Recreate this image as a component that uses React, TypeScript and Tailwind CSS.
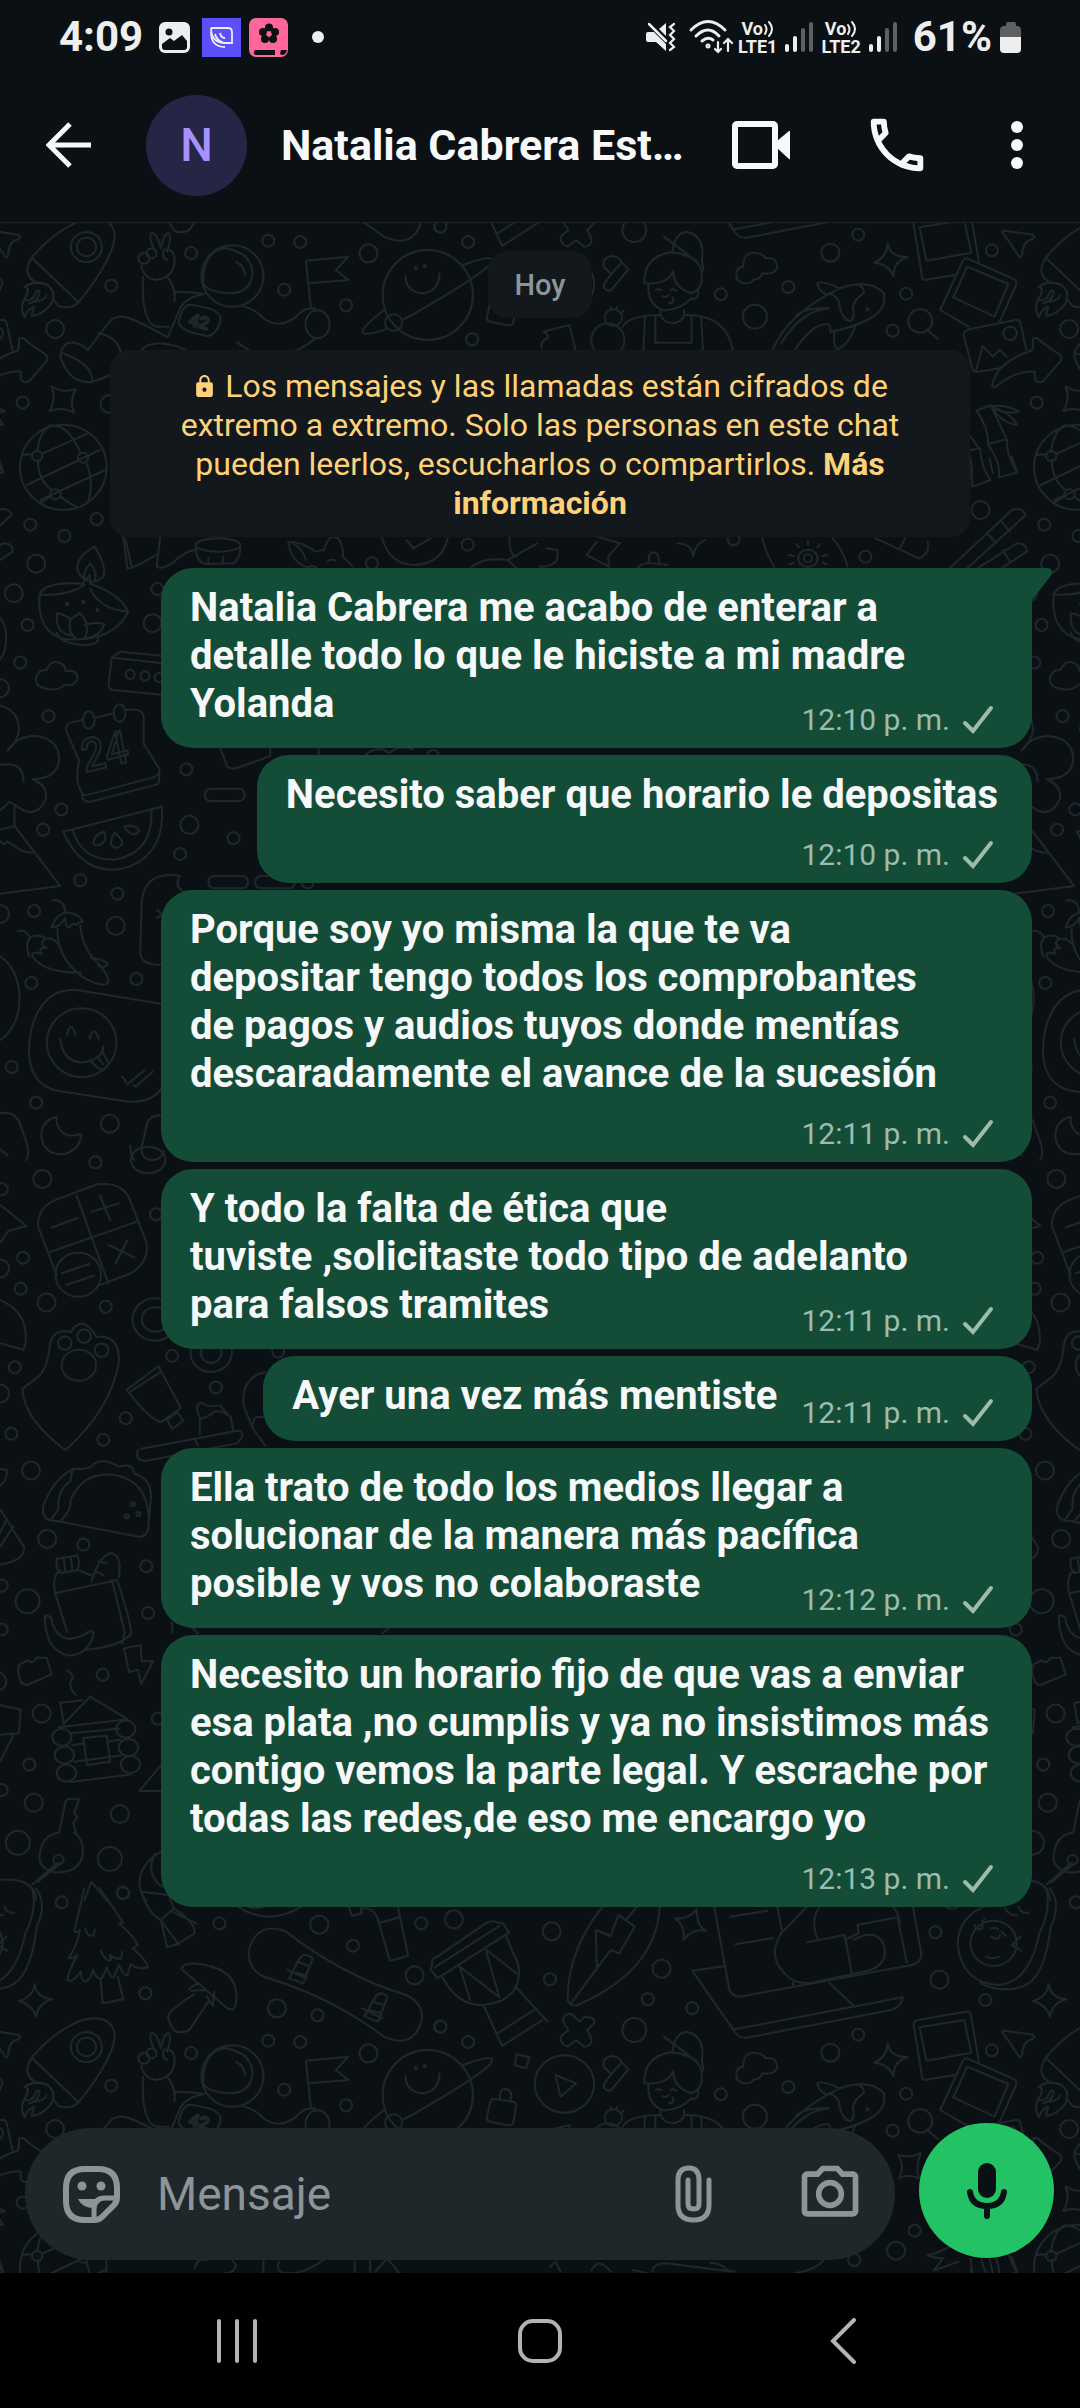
import { MdLock, MdOutlineCameraAlt, MdOutlineCall } from "react-icons/md";

type Message = {
  text: string;
  time: string;
  // where the time sits: at the end of the last line, on its own line or beside the text
  meta: "inline" | "below" | "beside";
};

const messages: Message[] = [
  {
    text: "Natalia Cabrera me acabo de enterar a detalle todo lo que le hiciste a mi madre Yolanda",
    time: "12:10 p. m.",
    meta: "inline",
  },
  {
    text: "Necesito saber que horario le depositas",
    time: "12:10 p. m.",
    meta: "below",
  },
  {
    text: "Porque soy yo misma la que te va\ndepositar tengo todos los comprobantes\nde pagos y audios tuyos donde mentías descaradamente el avance de la sucesión",
    time: "12:11 p. m.",
    meta: "below",
  },
  {
    text: "Y todo la falta de ética que tuviste\u00a0,solicitaste todo tipo de adelanto\npara falsos tramites",
    time: "12:11 p. m.",
    meta: "inline",
  },
  { text: "Ayer una vez más mentiste", time: "12:11 p. m.", meta: "beside" },
  {
    text: "Ella trato de todo los medios llegar a solucionar de la manera más pacífica posible y vos no colaboraste",
    time: "12:12 p. m.",
    meta: "inline",
  },
  {
    text: "Necesito un horario fijo de que vas a enviar esa plata ,no cumplis y ya no insistimos más contigo vemos la parte legal. Y escrache por todas las redes,de eso me encargo yo",
    time: "12:13 p. m.",
    meta: "below",
  },
];

type Patch = {
  x: number;
  y: number;
  sx: number;
  sy: number;
  small: number[][];
  medium: number[][];
  large?: number[][];
  shapes: string[];
  ellipses?: number[][];
  labels?: { x: number; y: number; size: number; turn: number; text: string }[];
};

// the doodle wallpaper, patch by patch
const patches: Patch[] = [
  {
    x: 0, y: 220, sx: 0.3444, sy: 0.3333,
    small: [[779, 62], [872, 66], [555, 99], [323, 197], [825, 209], [1005, 256], [1279, 20], [1359, 66], [1371, 358], [66, 548], [281, 897], [88, 914], [187, 948], [1358, 974], [1080, 1030]],
    medium: [[160, 327], [1070, 100], [105, 1031], [318, 552]],
    shapes: [
      // rocket
      "M92 113Q160 30 240 0Q320-20 333 40Q335 110 228 247Q205 270 170 258L152 235M92 113L228 247M92 113Q60 165 110 190",
      "M150 250Q165 215 135 193Q100 180 72 200Q90 205 72 235Q55 265 72 292Q80 265 100 260Q95 275 92 287Q125 285 150 250M75 240Q95 245 105 215Q120 205 112 228Q105 245 85 250M105 245Q130 240 135 225",
      // astronaut
      "M448 88Q430 50 440 40Q455 35 467 85Q478 35 490 40Q500 50 485 95M475 90Q470 115 485 120M410 135Q415 175 455 180Q510 170 507 115Q500 80 475 90",
      "M415 170Q410 310 455 320L490 320M485 170Q510 200 507 243M507 216Q560 215 595 222Q545 230 525 260L487 352Q400 300 360 290Q330 285 310 315L255 390Q225 360 195 370Q175 385 175 410Q200 490 265 487Q290 480 320 465M285 340Q340 350 350 395M180 400Q270 430 268 487",
      "M545 255Q555 252 615 268Q645 280 640 305Q625 350 600 348L550 335Q515 320 520 300Q530 262 545 255",
      "M590 190Q590 90 655 85Q735 100 733 165Q725 220 665 220Q600 215 590 190M685 125Q712 140 711 167",
      "M700 258Q740 265 765 295Q810 330 860 290Q880 262 915 265M888 122L1012 110L975 150L1012 180L897 190M888 122L903 265M915 355Q890 380 860 390M690 368L725 392M410 390Q450 350 540 390",
      // planet
      "M1345 135Q1440 100 1428 125Q1410 160 1170 300M1115 270Q1040 330 1055 340Q1080 345 1125 325M1177 168Q1180 218 1228 220Q1275 215 1276 160",
      // padlock
      "M1435 237L1490 245Q1500 248 1498 262L1490 310Q1485 318 1475 316L1422 305Q1412 300 1414 290L1424 245Q1428 236 1435 237M1452 235Q1450 205 1468 207Q1490 210 1482 240M1500 103L1537 112L1528 145L1495 136Z",
      "M150 500Q185 520 220 507Q200 545 215 577Q180 560 143 573Q165 540 150 500",
      // ball
      "M108 695Q115 630 150 615M125 700L255 640M78 795L290 690M118 840L305 750M160 618Q200 620 235 700M110 720Q110 780 150 810M250 725Q275 790 255 845M175 830Q200 850 225 862M65 705L95 702M118 848L145 830",
      "M275 980Q310 1040 300 1070Q285 1085 265 1085M275 980Q220 1010 225 1050Q235 1080 265 1085M262 1030Q285 1060 275 1083M262 1030Q240 1055 245 1078",
      "M358 950L370 1045Q380 1050 460 1000M465 950L455 1040Q465 1050 500 1030Q540 990 570 990M365 960L382 1040",
      "M568 980Q570 1030 600 1032L680 1030Q698 1010 698 980M605 1015V1030M648 1012V1028",
      "M900 1045Q845 1030 837 965Q880 965 915 995L940 990Q960 930 985 960Q1000 990 995 1010L1025 1040M850 970Q880 985 888 1020M895 1042Q905 1035 918 1042M950 1025Q960 1015 975 1022",
      "M1110 955Q1130 1035 1205 1035Q1285 1030 1300 955M1180 960L1200 985L1250 955M1365 1045Q1400 1010 1475 1020L1500 1045M1475 1020L1560 970M1480 950Q1475 1000 1500 1010",
      "M565 745Q570 715 600 720Q660 690 685 735Q680 760 655 760M765 720V760M810 725Q800 750 820 758Q870 770 940 720M1030 725V760M1075 720V760M1090 755L1125 715L1160 760",
    ],
    ellipses: [[251, 81, 45, 45], [251, 81, 28, 28], [418, 115, 16, 16], [440, 100, 14, 15], [675, 168, 90, 92], [922, 313, 35, 42], [1242, 225, 131, 135], [1143, 308, 25, 25], [1208, 145, 3, 3], [1233, 139, 3, 3], [184, 742, 126, 128], [108, 708, 15, 15], [241, 713, 15, 15], [161, 823, 15, 15], [633, 975, 65, 20]],
    labels: [{ x: 545, y: 314, size: 52, turn: 16, text: "42" }],
  },
  {
    x: 540, y: 220, sx: 0.3444, sy: 0.3333,
    small: [[924, 44], [721, 201], [525, 223], [1063, 221], [1024, 332], [1312, 91], [945, 1010], [1088, 632], [912, 720], [562, 958]],
    medium: [[843, 98], [1279, 870], [1034, 692]],
    large: [[274, 30], [624, 290]],
    shapes: [
      "M75-15Q90-25 100-10L115 5L130-10Q160-10 158 8L138 30L150 60Q148 80 128 80L105 60L80 80Q60 75 60 50L82 30L68 5Q65-8 75-15",
      "M1342 35Q1340 32 1348 32L1430 44Q1440 50 1430 57Q1400 65 1400 105Q1396 118 1390 108Z",
      // forward arrow
      "M1313 500Q1320 430 1430 390L1432 355Q1445 350 1455 365L1510 405Q1518 415 1510 425L1460 485Q1440 490 1437 475V455Q1380 450 1320 503",
      "M1190 1045L1370 870Q1400 860 1410 885L1240 1045M1270 1045L1385 970Q1415 970 1413 995L1340 1045M1340 905L1365 935M1300 942L1325 970M1345 990L1362 1022",
      "M1125 330L1155 357",
      "M187 190Q180 210 205 212L257 148L235 125Q230 108 205 108Q180 115 185 140L207 162ZM207 162L235 130",
      "M45 165L105 190L60 230Z",
      // cook
      "M385 95Q390 40 425 35Q480 45 470 125L475 152M360 50L455 125M303 190Q300 110 380 97Q470 105 470 170Q470 210 440 220Q390 205 386 155Q370 195 303 190M315 190Q310 250 355 270Q400 275 440 235M458 210Q465 235 440 238",
      "M335 210Q342 205 352 210M378 210Q390 205 396 212M355 228Q362 235 375 225M385 232Q395 245 375 250",
      "M350 270V285Q360 310 387 310Q415 305 418 285V270M350 285Q260 285 240 320M418 285Q540 280 560 390M305 290L300 390M335 290V368H440V290M468 290L473 390",
      "M205 262L210 270M225 262L220 270M243 272L235 280M10 335L85 315Q100 370 102 390M10 335Q30 345 20 355Q0 365 5 385",
      "M600 190Q570 190 570 165Q570 140 590 140Q590 100 620 98Q650 100 655 115Q690 110 688 145Q680 165 645 160Q640 180 620 178Q615 190 600 190Z",
      "M1010 70Q1015 110 1067 112Q1025 125 1027 168Q1010 130 970 128Q1005 115 1010 70",
      // snapshots
      "M1275 130L1252-10Q1250-28 1238-25L1096 0Q1083 5 1085 15L1110 175Q1115 182 1130 178L1205 165M1102 22L1232 0L1252 98L1122 122Z",
      "M1335 305L1382 195Q1385 182 1378 178L1240 115Q1232 115 1228 122L1162 270L1245 320M1240 140L1360 192L1320 290L1200 232Z",
      "M1412 388L1395 308Q1392 298 1380 300L1245 328Q1228 335 1230 345L1255 445Q1260 460 1275 455L1335 445M1265 455L1285 378L1315 410L1335 390L1355 410",
      // orca
      "M675 390Q720 280 870 205Q960 175 998 220Q1010 270 950 300Q900 325 845 335M870 205Q820 180 805 190Q810 215 830 222M840 265Q760 270 700 370M840 265Q780 260 745 285M740 390Q790 310 835 312Q845 320 843 335M840 220Q870 230 870 260Q880 300 900 303Q915 300 908 260Q915 235 940 220Q942 205 930 198M855 335Q850 380 865 388Q900 370 915 318",
      // bamboo
      "M1268 572L1310 555M1268 572Q1305 630 1300 672L1355 658M1310 560Q1335 610 1355 658M1300 672Q1340 730 1332 773L1385 757M1355 658Q1355 710 1385 757M1250 650L1275 685M1250 690L1278 685Q1280 740 1308 780L1255 800L1252 750M1310 560Q1350 550 1390 575Q1350 585 1310 560Q1340 610 1385 615Q1370 580 1310 560",
      "M135 1005L165 965M135 1005L200 1040L198 1010L232 970L165 950M315 1030Q315 995 330 997Q348 1000 345 1035M285 1045Q290 1020 370 1035M400 970Q440 970 445 1010Q450 970 480 960M0 1040Q60 1040 50 990L20 985",
      "M645 955Q660 1010 680 1040M850 955Q880 990 893 1040M778 962V975M812 972L805 982M745 972L752 982M835 1005L820 1008M722 1005L738 1008M832 1032L820 1028M725 1032L738 1028M975 955L1100 1015Q1135 1000 1125 965M1060 955L1045 985",
      "M1040 405Q1075 415 1105 400Q1090 440 1100 475Q1065 460 1043 475Q1060 435 1040 405",
      "M1205 670Q1160 700 1125 705Q1145 715 1170 715L1143 752L1215 725M1250 715L1255 760M1305 715L1315 760M1370 710L1385 755",
      "M325 755Q330 730 365 730L565 755M495 730Q515 725 545 750M825 720Q800 750 740 760M30 740L45 725L60 755M150 750Q170 710 205 755M270 750L310 760",
    ],
    ellipses: [[1104, 303, 35, 35], [71, 192, 86, 86], [213, 293, 25, 25], [197, 360, 48, 50], [1365, 340, 20, 20], [951, 268, 3, 3], [778, 1015, 28, 26], [778, 1015, 12, 12]],
  },
  {
    x: 0, y: 560, sx: 0.3444, sy: 0.3827,
    small: [[80, 170], [59, 268], [141, 408], [541, 547], [178, 652], [125, 705], [678, 727], [523, 768], [233, 837], [341, 872], [99, 917], [91, 1105], [396, 1095], [34, 1325], [105, 1418], [457, 76], [893, 842], [1257, 512]],
    medium: [[40, 87], [443, 165], [550, 692], [336, 956], [319, 1473], [0, 335], [0, 925]],
    shapes: [
      // oil lamp
      "M115 90Q130 55 240 62L260 40L262 62Q350 90 372 135Q290 130 262 75M115 90Q200 95 245 65M115 90Q105 190 190 207Q330 215 372 135",
      "M165 140Q185 140 205 155L232 138Q265 170 245 205M165 140Q160 190 205 197M205 155Q195 190 220 205M245 170Q280 160 303 168Q290 200 250 205M165 190Q175 220 250 222Q285 220 285 205",
      "M130 335Q100 330 105 305Q115 285 135 288Q145 265 165 267Q190 270 190 290Q225 285 225 310Q215 332 190 325Q165 345 130 335",
      "M470 250L350 240L325 255L315 325Q316 338 330 340L470 352M325 255L470 270",
      // broccoli
      "M-5 380Q55 390 55 445Q50 475 22 498Q50 460 100 460Q170 465 172 520Q170 570 95 573Q140 590 133 625Q110 670 70 655L28 632L0 655M0 535Q70 525 68 580M42 645V695L0 705M42 695L175 852L0 872M0 735Q15 750 20 735Q35 745 40 745Q60 765 100 765",
      // calendar
      "M240 418L205 425Q190 430 192 445L230 525Q222 550 225 580Q235 615 250 615L445 568Q468 560 462 545L417 480V410Q415 385 365 392M275 412L325 402M238 615Q240 632 260 632L455 587Q465 582 462 560",
      "M183 710L470 645Q480 760 380 800Q250 840 183 710M210 705Q240 790 340 782Q445 760 440 655M272 742Q268 720 303 710Q312 742 285 745Q275 748 272 742M333 712Q362 735 353 745Q335 760 322 742Q322 725 333 712M360 696Q395 690 404 708Q385 730 360 696",
      // chillies
      "M153 890Q185 885 190 920M150 960Q165 920 200 922Q230 925 240 945Q225 945 222 955Q210 945 205 958Q190 965 190 935Q175 960 150 960M167 965Q165 1040 240 1090Q300 1120 313 1105Q320 1085 270 1040Q240 1010 232 955",
      "M52 970Q75 965 85 985M85 1035Q70 1000 90 985Q115 975 132 990Q110 1000 135 1015Q110 1010 120 1030Q90 1020 95 1037Q130 1080 235 1078M132 990Q155 985 170 1005M265 1040Q310 1045 312 1058Q300 1068 285 1060",
      "M470 1058Q405 1060 407 1020L412 890Q420 820 500 823L522 825Q505 850 530 865M457 915L470 925M457 935L470 928",
      "M611 598H694Q710 600 710 614Q708 630 694 630H611Q595 628 595 614Q595 600 611 598M621 826H704Q720 828 720 842Q718 858 704 858H621Q605 856 605 842Q605 828 621 826M757 826H840Q856 828 856 842Q854 858 840 858H757Q741 856 741 842Q741 828 757 826",
      "M640 492L660 540Q670 548 690 543L785 512V492M925 492V510M1060 510Q1100 480 1130 505Q1160 480 1200 495",
      // laughing sticker
      "M470 1160L220 1123Q120 1120 90 1230Q60 1380 190 1390L370 1415Q440 1420 470 1380M175 1250Q180 1310 240 1313Q300 1305 300 1270M195 1240Q205 1200 220 1240M260 1250Q272 1212 287 1252M265 1310Q300 1350 315 1315L298 1285M283 1298L300 1318M355 1350L370 1370L420 1333M388 1372L395 1375L443 1337",
      "M165 1455Q120 1465 120 1505Q125 1555 185 1553Q235 1540 235 1500Q200 1510 180 1495Q160 1475 165 1455",
      "M0 1445Q50 1440 60 1480L80 1530Q85 1560 75 1568M0 1540L22 1555M470 1450Q430 1450 425 1480L410 1540Q415 1568 440 1568Q470 1568 475 1545M378 1530Q380 1560 390 1568",
      "M0 1035Q55 1070 57 1145Q55 1220 0 1255M0 150Q18 170 18 200Q18 240 0 260",
    ],
    ellipses: [[195, 115, 3, 3], [242, 110, 3, 3], [283, 131, 3, 3], [378, 299, 13, 12], [421, 303, 13, 12], [462, 307, 13, 12], [258, 418, 17, 23], [347, 400, 17, 23], [237, 1261, 101, 90]],
    labels: [{ x: 246, y: 555, size: 120, turn: -12, text: "24" }],
  },
  {
    x: 0, y: 1160, sx: 0.3444, sy: 0.4719,
    small: [[67, 207], [60, 273], [307, 311], [43, 439], [33, 580], [300, 593], [242, 815], [365, 547], [500, 415], [627, 482], [425, 861], [430, 960], [298, 1091], [85, 1281], [458, 1184], [357, 1553], [5, 1335], [277, 5], [453, 115], [808, 406], [5, 62], [5, 902], [5, 995]],
    medium: [[123, 40], [135, 302], [90, 658], [137, 803], [121, 1173], [98, 1362], [348, 1386], [0, 230], [0, 495], [-8, 1105]],
    large: [[80, 935], [52, 1447], [319, 1481]],
    shapes: [
      // calculator
      "M110 140Q110 100 160 85L280 52Q350 45 375 80L425 175Q435 215 380 240L290 265M110 140L165 245M222 75L315 262M145 195L400 130M150 143L225 123M265 110L345 92M290 75L320 128M315 180L390 207M370 170L335 220M180 240L260 220M192 265L272 245",
      "M0 95L77 140L25 150L0 175M0 297Q80 320 75 385L68 402L0 388",
      "M65 485L110 460Q140 440 145 390Q155 355 205 365Q240 325 280 375Q350 370 345 430Q320 530 190 615Q70 550 65 485",
      "M368 487L460 437L525 525L470 555Q440 555 368 487M380 490L465 450M485 550L515 535L533 552L500 570Z",
      "M400 615Q390 640 430 637L690 600Q715 580 695 573L410 612M580 580V545Q560 515 590 515Q600 525 640 520Q660 540 670 545L677 575M585 548Q600 545 610 540Q630 525 660 540M565 590L575 605M770 450Q700 460 707 520L735 570L770 605M735 560Q735 540 765 545",
      // taco
      "M210 655Q270 655 270 645Q300 630 345 650Q385 640 390 665Q440 675 438 715L430 785Q420 800 400 798L165 765Q120 765 125 735Q150 680 210 655M175 765Q210 740 205 720Q240 660 330 667Q430 680 432 760M210 655L205 680Q165 700 170 740L150 760",
      "M0 655L22 657Q20 680 0 690M0 740L70 820Q72 850 0 857M0 790L20 760M0 820L40 775",
      // lunch
      "M160 918L340 890M160 918Q150 880 175 870M165 845L225 838Q235 860 222 870L175 875Q160 865 165 845M185 845L190 872M205 840L210 868M160 918L195 1000M340 890Q385 990 380 1005Q350 1030 250 1038M325 890L362 1000L355 1025M265 895Q290 835 325 833Q355 840 345 885M225 868L265 880M275 870L300 880M285 850L310 855",
      "M130 965Q150 965 150 975Q160 1010 200 1015Q245 1010 255 1000Q275 995 270 1010Q250 1050 200 1050Q130 1040 130 965",
      "M52 1085L60 1105Q70 1115 80 1112L150 1090L135 1055L105 1055Q95 1070 80 1060L55 1070ZM360 1035L408 1028L412 1062L445 1062L410 1110L400 1080L375 1085Z",
      // cabin
      "M238 1145L175 1150L185 1195L262 1137L370 1185L170 1202M205 1215L345 1205M210 1240L245 1236M318 1232L350 1228M205 1318L380 1302M215 1275L350 1262M242 1225L310 1220L320 1275L252 1282ZM197 1082Q220 1095 205 1105Q200 1120 222 1135",
      "M0 1155L60 1165L55 1215L0 1218M38 1220L0 1275M470 1280L405 1337H470",
      // keys
      "M190 1360Q195 1350 230 1355L215 1385L225 1392L213 1405L222 1430M190 1360L172 1425Q120 1430 115 1475Q110 1500 160 1510Q235 1510 240 1470Q245 1440 215 1425M165 1490L95 1535M175 1490L110 1530M0 1525Q100 1520 105 1568M470 1465Q405 1490 405 1535Q410 1560 425 1568M450 1470Q420 1510 470 1540M245 1568L265 1530L310 1568",
      "M500 980V1003M550 985L575 1003M1110 1003L1140 985L1230 990",
    ],
    ellipses: [[227, 243, 66, 47], [450, 338, 65, 45], [450, 338, 38, 26], [430, 0, 50, 28], [188, 388, 20, 14], [244, 373, 20, 14], [295, 403, 20, 14], [229, 435, 50, 33], [613, 408, 60, 41], [613, 408, 30, 22], [386, 729, 6, 4], [402, 750, 6, 4], [368, 755, 6, 4], [180, 1223, 28, 18], [187, 1261, 28, 18], [193, 1299, 28, 18], [365, 1206, 28, 18], [373, 1245, 28, 18], [379, 1281, 28, 18], [170, 1483, 15, 10]],
  },
  {
    x: 0, y: 1890, sx: 0.3444, sy: 0.3333,
    small: [[179, 37], [357, 10], [637, 100], [1223, 100], [1025, 167], [422, 310], [922, 376], [1278, 410]],
    medium: [[927, 104], [1318, 88], [1204, 256], [804, 355]],
    shapes: [
      // fir tree
      "M245-5L215 125Q225 130 232 120Q230 150 200 205Q215 205 225 195Q200 240 195 270Q210 280 235 245Q235 270 245 275Q265 270 270 238Q280 270 295 265Q305 250 310 232Q320 265 330 262L345 225Q360 260 370 255L380 222Q400 240 430 232Q425 210 385 175L400 165Q390 140 345 100L358 98L290-5M292 267L298 340L358 328L342 260M247 115Q255 145 272 135L275 118M293 183Q310 220 322 210L320 195Q335 210 352 205L355 185",
      "M410 5Q430 70 467 90L485 172L515 162L565 130Q570 100 505 55L490 15ZM467 90L505 55M470 95L520 165M500 65L570 100",
      "M100 282Q108 325 152 328Q110 340 105 380Q95 345 55 333Q98 320 100 282",
      "M530 240Q520 225 560 220Q690 230 687 325Q685 370 660 355L530 240M605 335L550 420Q500 445 488 380Q490 360 565 312M548 298Q560 285 580 280M555 302L600 300M600 318L618 348L622 305",
      // snowboard
      "M830 125Q1000 260 1180 315Q1230 340 1225 390Q1200 480 1115 440Q960 320 770 262Q720 240 722 180Q750 90 830 125M840 265L870 205Q885 185 908 205L880 280L840 265M835 240L890 265M862 215L900 228M850 245L890 258M1058 380L1090 320Q1105 300 1125 320L1098 395L1058 380M1052 355L1110 385M1080 335L1115 345M1070 360L1108 370",
      "M1012 48L1022 78L1050 70L1048 55Q1090 50 1100 98L1132 212L1185 198L1155 48M1100 100L1158 82",
      // drum
      "M1255 225Q1250 205 1270 200L1410 100Q1430 88 1445 98L1460 100L1478 128L1270 265L1250 238ZM1262 232L1450 108M1285 262Q1330 350 1405 345Q1520 330 1505 225L1470 140M1335 230L1365 330M1335 230L1450 322L1410 178L1500 250M1405 348L1458 468L1575 390M1495 288L1590 395M1445 430L1558 355",
      "M690 50Q780 110 875 50M720 50Q745 60 770 48",
    ],
  },
  {
    x: 540, y: 1890, sx: 0.3444, sy: 0.3333,
    small: [[29, 268], [313, 328], [442, 355], [1148, 127], [1293, 330]],
    medium: [[34, 124], [353, 236], [1160, 269], [1195, 30]],
    shapes: [
      // surfboard
      "M185 45Q80 180 80 330Q90 355 115 342Q340 240 348 45M90 340L165 235L162 120L205 138L228 75L275 110L230 190L205 180L165 235M285 45L250 90",
      "M455 58Q455 110 482 122Q440 115 417 150Q422 105 392 85Q430 90 455 58",
      // laptop
      "M505 45L550 300Q560 320 580 320L1080 225Q1110 215 1107 190L1082 45M688 45L703 125M552 80L660 62M568 163L677 144M780 45L700 130Q660 200 710 250Q740 285 790 278L960 240Q1010 220 1000 170Q980 110 910 150M775 157L885 135L905 250M810 55Q785 90 805 145M885 150L925 130L922 105L1038 82L1065 218M1000 25Q1045 60 1045 105",
      "M537 228L442 242L565 425Q575 445 600 443L1020 360Q1050 350 1053 322L565 418M735 285V275M840 278L908 345",
      // baby
      "M1480-5Q1515 40 1483 110Q1465 270 1400 290Q1340 310 1280 280M1300 45Q1210 80 1213 170Q1230 280 1330 285Q1420 280 1450 130Q1485 60 1470-5M1262 105Q1270 125 1285 115Q1282 95 1290 88M1395 140L1370 165L1397 182M1310 115Q1325 110 1330 118M1340 125L1352 138M1310 140Q1330 155 1335 135M1295 200Q1315 210 1335 200M1350 55Q1365 80 1385 75M1390 50Q1395 70 1418 68",
    ],
    ellipses: [[1317, 160, 67, 68]],
  },
];

function DoodlePatch({ patch }: { patch: Patch }) {
  const rings = [
    ...patch.small.map(([x, y]) => [x, y, 6]),
    ...patch.medium.map(([x, y]) => [x, y, 9]),
    ...(patch.large ?? []).map(([x, y]) => [x, y, 12]),
  ];
  return (
    <g transform={`translate(${patch.x} ${patch.y}) scale(${patch.sx} ${patch.sy})`}>
      {rings.map(([x, y, r], i) => (
        <ellipse key={i} cx={x} cy={y} rx={r / patch.sx} ry={r / patch.sy} vectorEffect="non-scaling-stroke" />
      ))}
      {patch.ellipses?.map(([x, y, rx, ry], i) => (
        <ellipse key={i} cx={x} cy={y} rx={rx} ry={ry} vectorEffect="non-scaling-stroke" />
      ))}
      {patch.shapes.map((d, i) => (
        <path key={i} d={d} vectorEffect="non-scaling-stroke" />
      ))}
      {patch.labels?.map((l) => (
        <text
          key={l.text}
          x={l.x}
          y={l.y}
          fontSize={l.size}
          transform={`rotate(${l.turn} ${l.x} ${l.y})`}
          vectorEffect="non-scaling-stroke"
          className="font-medium"
        >
          {l.text}
        </text>
      ))}
    </g>
  );
}

function Wallpaper() {
  return (
    <svg className="absolute inset-0 h-full w-full" aria-hidden="true">
      <defs>
        <g id="doodles" fill="none" stroke="#20272b" strokeWidth="2" strokeLinecap="round" strokeLinejoin="round">
          {patches.map((patch, i) => (
            <DoodlePatch key={i} patch={patch} />
          ))}
        </g>
        <pattern id="tile" width="1014" height="1800" patternUnits="userSpaceOnUse">
          <use href="#doodles" x="0" y="-223" />
          <use href="#doodles" x="-1014" y="-223" />
          <use href="#doodles" x="1014" y="-223" />
          <use href="#doodles" x="0" y="-2023" />
          <use href="#doodles" x="-1014" y="-2023" />
          <use href="#doodles" x="0" y="1577" />
        </pattern>
      </defs>
      <rect width="100%" height="100%" fill="url(#tile)" />
    </svg>
  );
}

function Signal() {
  return (
    <svg width="28" height="32" viewBox="0 0 28 32" strokeWidth="4" strokeLinecap="round">
      <path d="M2 25V29M10 17V29" stroke="#eee" />
      <path d="M18 9V29M26 3V29" stroke="#5d6163" />
    </svg>
  );
}

function Volte({ line }: { line: string }) {
  return (
    <div className="flex flex-col items-center text-[18px] leading-[17px] font-bold">
      <span className="flex items-center">
        Vo
        <svg width="11" height="18" viewBox="0 0 11 18" fill="none" stroke="#eee" strokeWidth="2" strokeLinecap="round">
          <path d="M2 5Q5 9 2 14M6 2Q12 9 6 16" />
        </svg>
      </span>
      <span>{line}</span>
    </div>
  );
}

function StatusBar() {
  return (
    <div className="flex h-[74px] items-center justify-between px-[59px] text-[42px] leading-none font-bold text-[#eee]">
      <div className="flex items-center">
        <span>4:09</span>
        <svg className="ml-4" width="31" height="31" viewBox="0 0 31 31">
          <rect width="31" height="31" rx="6" fill="#eee" />
          <circle cx="10" cy="10" r="3.5" fill="#0a1014" />
          <path d="M3 22L11 16L15 19L23 13L28 19V25Q28 28 25 28H6Q3 28 3 25Z" fill="#0a1014" />
        </svg>
        <svg className="ml-3" width="39" height="39" viewBox="0 0 39 39">
          <rect width="39" height="39" fill="#5a4ffb" />
          <path
            d="M9 10H26Q30 10 30 14V25H22Q9 24 9 10M9 14Q9 29 23 29M13 16Q14 22 22 25M18 15Q19 20 23 20"
            fill="none"
            stroke="#eee"
            strokeWidth="1.8"
          />
        </svg>
        <svg className="ml-2" width="39" height="39" viewBox="0 0 39 39">
          <rect width="39" height="39" rx="7" fill="#ff6699" />
          <g fill="#0a1014">
            <circle cx="20" cy="9.500" r="4" />
            <circle cx="26" cy="14" r="4" />
            <circle cx="24" cy="21" r="4" />
            <circle cx="16" cy="21" r="4" />
            <circle cx="14" cy="14" r="4" />
            <path d="M7 32H26V37H7Q4 36 5 34Q5 32 7 32M32 32H38Q37 37 33 37L31 36Z" />
          </g>
          <circle cx="20" cy="16" r="2.500" fill="#ff6699" />
        </svg>
        <span className="ml-6 h-3 w-3 rounded-full bg-[#eee]" />
      </div>
      <div className="flex items-center">
        <svg width="30" height="30" viewBox="0 0 30 30" fill="none" stroke="#eee" strokeLinecap="round">
          <path d="M2 10H8L20 22V29L10 20H2Q0 20 0 18V12Q0 10 2 10" fill="#eee" stroke="none" />
          <path d="M20 1V14L13 7Z" fill="#eee" stroke="none" />
          <path d="M3 2L20 19" strokeWidth="2.500" />
          <path d="M28 2L24 5L28 9L24 13L28 17L24 21L28 25L24 28" strokeWidth="2.200" />
        </svg>
        <svg className="ml-3" width="46" height="36" viewBox="0 0 46 36" fill="none" stroke="#eee" strokeWidth="3" strokeLinecap="round">
          <path d="M3 11Q20-6 37 11M8 17Q20 5 31 17M14 22Q20 17 25 21" />
          <circle cx="20" cy="27" r="1" />
          <path d="M30 23V33M27 30L30 33L33 30M40 32V20M36 24L40 20L44 24" strokeWidth="2.200" />
        </svg>
        <div className="ml-1">
          <Volte line="LTE1" />
        </div>
        <div className="ml-2">
          <Signal />
        </div>
        <div className="ml-2">
          <Volte line="LTE2" />
        </div>
        <div className="ml-2">
          <Signal />
        </div>
        <span className="ml-4">61%</span>
        <svg className="ml-2" width="21" height="31" viewBox="0 0 21 31">
          <path d="M6 2Q6 0 8 0H14Q16 0 16 2V4H18Q21 5 21 8V15H0V8Q0 5 3 4H6Z" fill="#5d6163" />
          <path d="M0 15H21V27Q21 31 17 31H4Q0 31 0 27Z" fill="#eee" />
        </svg>
      </div>
    </div>
  );
}

function Header() {
  return (
    <header className="flex h-[149px] items-center border-b border-[#1c2226] pb-1.5 pl-[46px] text-[#f7f8fa]">
      <button aria-label="Atrás">
        <svg width="46" height="46" viewBox="0 0 46 46" fill="none" stroke="currentColor" strokeWidth="5">
          <path d="M24 2L3 23L24 44M3 23H45" />
        </svg>
      </button>
      <div className="ml-[54px] flex h-[101px] w-[101px] shrink-0 items-center justify-center rounded-full bg-[#252545] text-[46px] font-medium text-[#a791ff]">
        N
      </div>
      <h1 className="ml-[34px] min-w-0 flex-1 truncate text-[43px] leading-[60px] font-bold">
        Natalia Cabrera Estudio Jurídico
      </h1>
      <div className="ml-12 flex items-center">
        <button aria-label="Videollamada">
          <svg width="58" height="48" viewBox="0 0 58 48">
            <rect x="3" y="3" width="40" height="42" rx="2" fill="none" stroke="currentColor" strokeWidth="6" />
            <path d="M45 20L57 10Q58 9 58 11V37Q58 39 57 38L45 27Z" fill="currentColor" />
          </svg>
        </button>
        <button className="ml-[72px]" aria-label="Llamar">
          <MdOutlineCall size={70} />
        </button>
        <button className="mr-14 ml-[78px]" aria-label="Más opciones">
          <svg width="14" height="48" viewBox="0 0 14 48" fill="currentColor">
            <circle cx="7" cy="6" r="6" />
            <circle cx="7" cy="24" r="6" />
            <circle cx="7" cy="42" r="6" />
          </svg>
        </button>
      </div>
    </header>
  );
}

function Meta({ time }: { time: string }) {
  return (
    <span className="flex shrink-0 items-center gap-3 pr-1 text-[30px] leading-[36px] font-normal text-[#9dbcae]">
      <time>{time}</time>
      <svg width="32" height="30" viewBox="0 0 32 30" fill="none" stroke="currentColor" strokeWidth="4" strokeLinecap="round">
        <path d="M3 18L11 26L29 3" />
      </svg>
    </span>
  );
}

function Bubble({ message, tail }: { message: Message; tail: boolean }) {
  const layout = {
    inline: "",
    below: "flex flex-col items-end gap-[18px]",
    beside: "flex items-end gap-6",
  }[message.meta];
  return (
    <li
      className={`relative rounded-[32px] bg-[#144d37] pt-4 pr-[34px] pb-[10px] pl-[29px] ${layout} ${tail ? "rounded-tr-none" : ""}`}
    >
      <p
        className={`flow-root text-[40px] leading-[48px] font-bold whitespace-pre-line text-[#f7f8fa] ${
          message.meta === "beside" ? "mb-[11px]" : ""
        } ${message.meta === "below" ? "w-full" : ""}`}
      >
        {message.text}
        {message.meta === "inline" && (
          <span className="float-right mt-[22px]">
            <Meta time={message.time} />
          </span>
        )}
      </p>
      {message.meta !== "inline" && <Meta time={message.time} />}
      {tail && (
        <svg className="absolute top-0 left-full" width="20" height="32" viewBox="0 0 20 32" fill="#144d37">
          <path d="M0 0H15Q20 0 20 4Q20 7 18 9L0 32Z" />
        </svg>
      )}
    </li>
  );
}

function Composer() {
  return (
    <form className="mt-auto flex items-end gap-6 pr-[26px] pb-[13px] pl-[25px] text-[#8d9598]">
      <div className="flex h-[132px] min-w-0 flex-1 items-center rounded-full bg-[#1f272a] pr-[31px] pl-[38px]">
        <button type="button" aria-label="Stickers">
          <svg width="57" height="57" viewBox="0 0 57 57" fill="none" stroke="currentColor" strokeWidth="6">
            <path d="M54 31V22Q54 3 35 3H22Q3 3 3 22V35Q3 54 22 54H31Q36 54 39 51L51 39Q54 36 54 31Z" />
            <path d="M54 32H42Q31 32 31 43V54" strokeWidth="5" />
            <circle cx="19" cy="20" r="4.500" fill="currentColor" stroke="none" />
            <circle cx="38" cy="20" r="4.500" fill="currentColor" stroke="none" />
            <path d="M15 33H40L31 42Q19 42 15 33" fill="currentColor" stroke="none" />
          </svg>
        </button>
        <input
          type="text"
          aria-label="Mensaje"
          placeholder="Mensaje"
          className="ml-[37px] min-w-0 flex-1 bg-transparent text-[46px] leading-[60px] outline-none placeholder:text-[#8d9598]"
        />
        <button type="button" aria-label="Adjuntar">
          <svg width="37" height="58" viewBox="0 0 37 58" fill="none" stroke="currentColor" strokeWidth="5" strokeLinecap="round">
            <path d="M34 15V40Q34 55 18.500 55Q3 55 3 40V15Q3 3 14 3Q24 3 24 15V39Q24 44 18.500 44Q13 44 13 39V15" />
          </svg>
        </button>
        <button type="button" className="ml-[84px]" aria-label="Cámara">
          <MdOutlineCameraAlt size={68} />
        </button>
      </div>
      <button
        type="button"
        aria-label="Grabar mensaje de voz"
        className="mb-0.5 flex h-[135px] w-[135px] shrink-0 items-center justify-center rounded-full bg-[#23c264] shadow-md"
      >
        <svg width="40" height="56" viewBox="0 0 40 56" fill="none" stroke="#0a1014" strokeWidth="6" strokeLinecap="round">
          <rect x="11" y="0" width="18" height="35" rx="9" fill="#0a1014" stroke="none" />
          <path d="M3 29Q5 43 20 43Q35 43 37 29M20 44V53" />
        </svg>
      </button>
    </form>
  );
}

function NavBar() {
  return (
    <nav className="grid h-[135px] grid-cols-3 items-center justify-items-center bg-black px-[86px] text-[#b3b3b3]">
      <button aria-label="Recientes">
        <svg width="40" height="44" viewBox="0 0 40 44" stroke="currentColor" strokeWidth="4" strokeLinecap="round">
          <path d="M2 2V42M20 2V42M38 2V42" />
        </svg>
      </button>
      <button aria-label="Inicio">
        <svg width="44" height="44" viewBox="0 0 44 44" fill="none" stroke="currentColor" strokeWidth="4">
          <rect x="2" y="2" width="40" height="40" rx="13" />
        </svg>
      </button>
      <button aria-label="Volver">
        <svg width="26" height="46" viewBox="0 0 26 46" fill="none" stroke="currentColor" strokeWidth="4" strokeLinecap="round">
          <path d="M24 2L3 23L24 44" />
        </svg>
      </button>
    </nav>
  );
}

export default function App() {
  return (
    <div className="flex min-h-screen flex-col bg-[#0a1014] font-[Roboto,sans-serif]">
      <StatusBar />
      <Header />
      <main className="relative flex flex-1 flex-col">
        <Wallpaper />
        <div className="relative flex flex-1 flex-col">
          <div className="mt-7 self-center rounded-[20px] bg-[#12181c] px-[26px] pt-4 pb-[14px] text-[29px] leading-[37px] font-medium text-[#8d9598]">
            Hoy
          </div>
          <p className="mx-[110px] mt-8 rounded-[20px] bg-[#12181c] px-[60px] pt-[17px] pb-[14px] text-center text-[32px] leading-[39px] text-[#ffd279]">
            <MdLock className="mr-2 mb-1 inline" size={25} />
            Los mensajes y las llamadas están cifrados de extremo a extremo. Solo las personas en este chat pueden
            leerlos, escucharlos o compartirlos.{" "}
            <a href="#info" className="font-bold">
              Más información
            </a>
          </p>
          <ul className="mt-[31px] mb-8 flex flex-col items-end gap-[7px] pr-12 pl-[161px]">
            {messages.map((message, i) => (
              <Bubble key={i} message={message} tail={i === 0} />
            ))}
          </ul>
          <Composer />
        </div>
      </main>
      <NavBar />
    </div>
  );
}
